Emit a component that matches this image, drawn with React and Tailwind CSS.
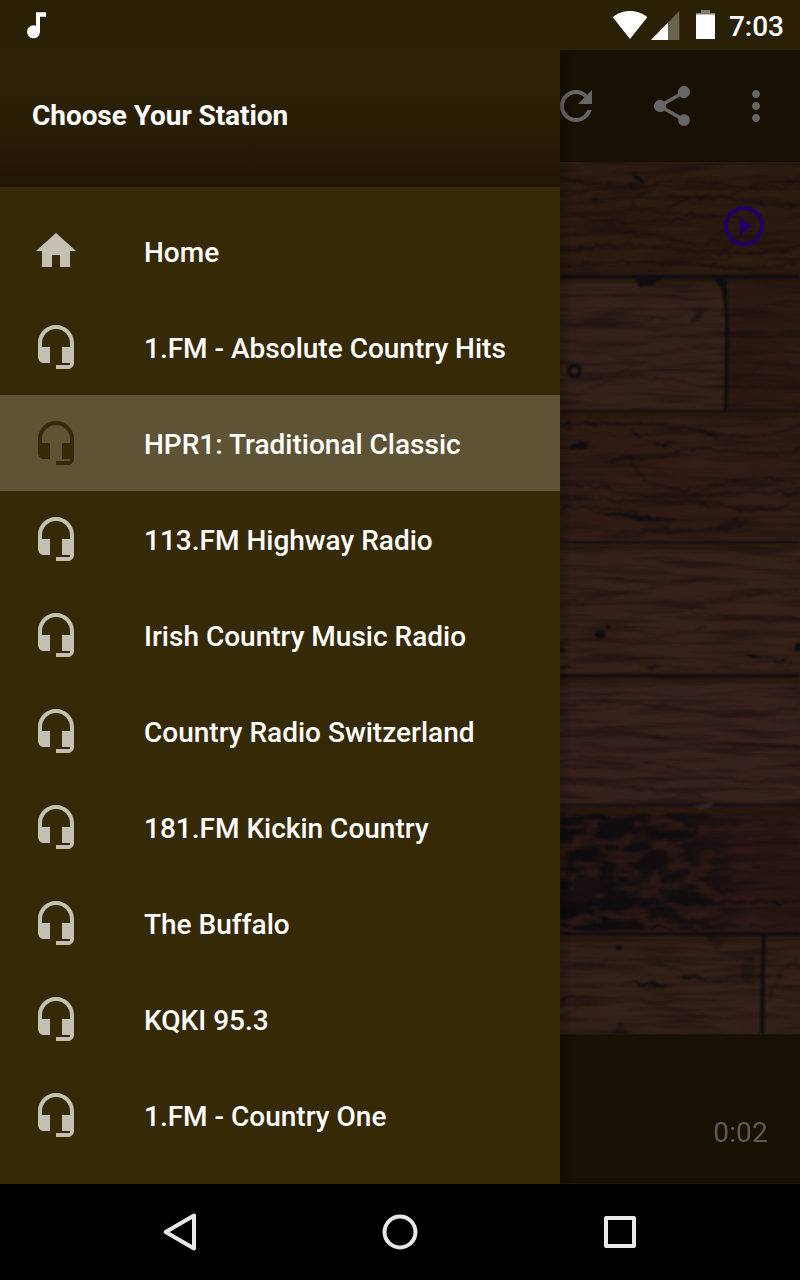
import React, { useState } from 'react';

const stations = [
  { name: 'Home', icon: 'home' },
  { name: '1.FM - Absolute Country Hits', icon: 'headset' },
  { name: 'HPR1: Traditional Classic', icon: 'headset' },
  { name: '113.FM Highway Radio', icon: 'headset' },
  { name: 'Irish Country Music Radio', icon: 'headset' },
  { name: 'Country Radio Switzerland', icon: 'headset' },
  { name: '181.FM Kickin Country', icon: 'headset' },
  { name: 'The Buffalo', icon: 'headset' },
  { name: 'KQKI 95.3', icon: 'headset' },
  { name: '1.FM - Country One', icon: 'headset' },
];

const icons = {
  home: 'M10 20v-6h4v6h5v-8h3L12 3 2 12h3v8z',
  headset:
    'M12 1c-4.97 0-9 4.03-9 9v7c0 1.66 1.34 3 3 3h3v-8H5v-2c0-3.87 3.13-7 7-7s7 3.13 7 7v2h-4v8h4v1h-7v2h6c1.66 0 3-1.34 3-3V10c0-4.97-4.03-9-9-9z',
  refresh:
    'M17.65 6.35C16.2 4.9 14.21 4 12 4c-4.42 0-7.99 3.58-7.99 8s3.57 8 7.99 8c3.73 0 6.84-2.55 7.73-6h-2.08c-.82 2.33-3.04 4-5.65 4-3.31 0-6-2.69-6-6s2.69-6 6-6c1.66 0 3.14.69 4.22 1.78L13 11h7V4l-2.35 2.35z',
  share:
    'M18 16.08c-.76 0-1.44.3-1.96.77L8.91 12.7c.05-.23.09-.46.09-.7s-.04-.47-.09-.7l7.05-4.11c.54.5 1.25.81 2.04.81 1.66 0 3-1.34 3-3s-1.34-3-3-3-3 1.34-3 3c0 .24.04.47.09.7L8.04 9.81C7.5 9.31 6.79 9 6 9c-1.66 0-3 1.34-3 3s1.34 3 3 3c.79 0 1.5-.31 2.04-.81l7.12 4.16c-.05.21-.08.43-.08.65 0 1.61 1.31 2.92 2.92 2.92s2.92-1.31 2.92-2.92-1.31-2.92-2.92-2.92z',
  more: 'M12 8c1.1 0 2-.9 2-2s-.9-2-2-2-2 .9-2 2 .9 2 2 2zm0 2c-1.1 0-2 .9-2 2s.9 2 2 2 2-.9 2-2-.9-2-2-2zm0 6c-1.1 0-2 .9-2 2s.9 2 2 2 2-.9 2-2-.9-2-2-2z',
};

const Icon = ({ name, className }) => (
  <svg viewBox="0 0 24 24" fill="currentColor" className={`h-12 w-12 shrink-0 ${className}`}>
    <path d={icons[name]} />
  </svg>
);

const StatusBar = () => (
  <div className="flex h-[50px] shrink-0 items-center justify-between bg-[#2a2005] pr-4 pl-[27px] text-white">
    <svg width="20" height="27" viewBox="0 0 20 27" fill="currentColor">
      <circle cx="6.5" cy="19.8" r="6.5" />
      <path d="M9 0.3h10v4.4h-6v15H9z" />
    </svg>
    <div className="flex items-center">
      <svg width="104" height="32" viewBox="612 9 104 32" fill="currentColor">
        <path d="M612.8 17.2C617 13.5 623 11 630 11s13 2.5 17.3 6.2L630 39z" />
        <path d="M679.3 11v29H651z" opacity=".3" />
        <path d="M668 22.5V40h-17z" />
        <path d="M701 10h9v3h5v2h-19v-2h5z" opacity=".4" />
        <path d="M696 14.5h19V39h-19z" />
      </svg>
      <span className="ml-[13px] pt-1 text-[28px] leading-8 font-medium">7:03</span>
    </div>
  </div>
);

const planks = [
  { y: 162, h: 114, fill: '#2c1a10' },
  { y: 276, h: 135, fill: '#342019' },
  { y: 411, h: 132, fill: '#2f1b14' },
  { y: 543, h: 133, fill: '#342018' },
  { y: 676, h: 130, fill: '#35201b' },
  { y: 806, h: 128, fill: '#2c1714' },
  { y: 934, h: 100, fill: '#321f17' },
];

const grain = [
  'M560 178Q620 190 650 184T735 186T800 176',
  'M560 196Q610 180 660 193T740 192T800 184',
  'M655 193Q630 197 632 204T670 213T740 216',
  'M560 212Q600 224 640 222T720 216',
  'M668 206Q700 192 735 199T800 205',
  'M560 236Q620 226 660 237T720 240',
  'M560 250Q620 240 680 250T800 247',
  'M560 267Q640 258 700 265T800 262',
  'M560 427Q640 418 700 431T800 425',
  'M610 461Q650 461 672 454T740 452T800 449',
  'M632 463Q640 484 670 488T730 482T800 484',
  'M560 486Q590 484 618 491T700 495T800 493',
  'M560 498Q610 501 640 500T720 507T800 501',
  'M560 508Q600 505 640 512',
];

const faintGrain = [
  'M560 322Q620 328 690 314',
  'M560 374Q600 382 640 363T715 347',
  'M570 400Q615 369 670 380T724 385',
  'M750 370Q775 357 800 370',
  'M742 392Q780 375 800 384',
  'M560 604Q610 595 650 588T710 580',
  'M800 592Q690 598 690 608T800 620',
  'M560 626Q620 625 640 632T705 629',
  'M560 665Q620 655 680 668T800 662',
  'M560 705Q620 698 680 710T800 706',
  'M560 730Q600 725 640 735T800 748',
  'M560 760Q620 752 680 769T800 779',
  'M560 780Q600 783 640 788T700 796',
  'M650 858Q700 852 740 862T800 857',
  'M560 970Q620 950 680 971T762 977',
  'M560 1018Q610 985 660 1005T750 1015',
  'M768 1000Q780 965 800 960',
];

const WoodBackground = () => (
  <svg viewBox="560 162 240 872" width="240" height="872" className="block">
    <defs>
      <filter id="fine" x="0" y="0" width="100%" height="100%" colorInterpolationFilters="sRGB">
        <feTurbulence type="fractalNoise" baseFrequency="0.014 0.13" numOctaves="3" seed="7" />
        <feColorMatrix values="0 0 0 0 0.08  0 0 0 0 0.045  0 0 0 0 0.05  3 0 0 0 -1.3" />
      </filter>
      <filter id="light" x="0" y="0" width="100%" height="100%" colorInterpolationFilters="sRGB">
        <feTurbulence type="fractalNoise" baseFrequency="0.012 0.045" numOctaves="3" seed="21" />
        <feColorMatrix values="0 0 0 0 0.24  0 0 0 0 0.16  0 0 0 0 0.11  2 0 0 0 -0.8" />
      </filter>
      <filter id="char" x="0" y="0" width="100%" height="100%" colorInterpolationFilters="sRGB">
        <feTurbulence type="fractalNoise" baseFrequency="0.03 0.075" numOctaves="4" seed="4" />
        <feColorMatrix values="0 0 0 0 0.05  0 0 0 0 0.043  0 0 0 0 0.055  6 0 0 0 -2.5" />
        <feGaussianBlur stdDeviation="0.8" />
      </filter>
      <filter id="soft" filterUnits="userSpaceOnUse" x="550" y="152" width="260" height="892" colorInterpolationFilters="sRGB">
        <feGaussianBlur stdDeviation="0.9" />
      </filter>
      <filter id="rough" filterUnits="userSpaceOnUse" x="550" y="152" width="260" height="892" colorInterpolationFilters="sRGB">
        <feTurbulence type="fractalNoise" baseFrequency="0.09" numOctaves="2" seed="3" result="n" />
        <feDisplacementMap in="SourceGraphic" in2="n" scale="9" xChannelSelector="R" yChannelSelector="G" />
        <feGaussianBlur stdDeviation="1.1" />
      </filter>
      <linearGradient id="charFade" x1="0" x2="1" y1="0" y2="0">
        <stop offset="0" stopColor="#fff" />
        <stop offset="0.55" stopColor="#fff" stopOpacity="0.75" />
        <stop offset="0.85" stopColor="#fff" stopOpacity="0.1" />
      </linearGradient>
      <mask id="charMask">
        <rect x="560" y="812" width="240" height="118" fill="url(#charFade)" />
      </mask>
    </defs>

    {planks.map((p) => (
      <rect key={p.y} x="560" y={p.y} width="240" height={p.h} fill={p.fill} />
    ))}
    <rect x="728" y="278" width="72" height="133" fill="#2b1811" />
    <rect x="560" y="162" width="240" height="872" filter="url(#light)" opacity=".3" />
    <rect x="560" y="162" width="240" height="872" filter="url(#fine)" opacity=".42" />
    <g mask="url(#charMask)">
      <rect x="560" y="812" width="240" height="118" filter="url(#char)" />
    </g>

    <g filter="url(#rough)" fill="none" stroke="#180e0f">
      {grain.map((d) => (
        <path key={d} d={d} strokeWidth="1.8" opacity=".75" />
      ))}
      {faintGrain.map((d) => (
        <path key={d} d={d} strokeWidth="1.8" opacity=".4" />
      ))}
    </g>

    {/* seams between the boards */}
    <g filter="url(#soft)" fill="none" stroke="#0e0c10">
      <path d="M560 281h240M560 415h240M560 547h240M560 681h240M560 811h240M560 940h240" stroke="#261708" strokeWidth="5" opacity=".6" />
      <path d="M560 276.5h240" strokeWidth="4" />
      <path d="M560 411h240M560 542.5h240M560 805h240" strokeWidth="2.2" />
      <path d="M560 676h240M560 934h240" strokeWidth="3.4" />
      <path d="M721 276Q727 300 727 330L726 411" strokeWidth="3.5" />
      <path d="M763.5 935L762 1034" strokeWidth="4" />
    </g>

    {/* knots and cracks */}
    <g filter="url(#rough)" fill="#0e0c11">
      <path d="M632 174l6 1 6 7-8-1zM634 278h30l-14 9-10-1zM716 278h14l-3 20z" />
      <ellipse cx="596" cy="200" rx="3" ry="1.5" opacity=".6" />
      <path d="M715 251l22-4-12 6zM690 325l8-14 10-3-9 12z" opacity=".5" />
      <path d="M570 445l22-5-6 6 8 1-24 2zM648 444l28-2-14 4zM612 461l30-6-10 6zM597 513l42 1 38 5-35 1z" />
      <path d="M600 534l60-6 40 2 35-10 15 4-14 6-70 4z" opacity=".45" />
      <path d="M561 422h12l-4 2zM580 424l20-3-10 5zM630 430l8 6 5 1-6-5zM700 426l20 13-12-5z" />
      <path d="M560 646l8 2-8 3zM745 657l12-2 4 3-8 1zM765 658l26 2-8 2zM560 666l14 1-12 2zM640 667l22-1-10 2z" />
      <path d="M560 831l12 6v8l-12-4zM595 822l10-6 8 16-6 6zM628 818l9-3-3 12zM662 833l38-5-10 9-50 5z" opacity=".8" />
      <path d="M576 872l20 5 12-4 5 12-20 10 16 6-25 8-24-6v-8l16-8zM655 872l30-4 6 6-28 8zM710 887l28 4-20 4z" opacity=".7" />
      <path d="M560 902l60-2 180 1v2l-140 1-100 6zM596 926h190l-110 2z" opacity=".9" />
      <path d="M618 982l30 0 24 2-20 2zM678 975l35 3-30 1zM560 996l46 1-46 2z" />
      <path d="M612 1034l8-16 8 16zM706 937h20l-8 14zM738 965l14-8 4 14-10 14z" opacity=".35" />
    </g>
    <g filter="url(#soft)" fill="#0e0c11">
      <path d="M626 731q16 5 36 6t50 4 88 5v2q-60-2-90-7t-54-3z" fill="#1c0b10" />
      <ellipse cx="600.5" cy="634.5" rx="5.5" ry="4" />
      <circle cx="608" cy="627" r="2" />
      <circle cx="799" cy="647" r="4" />
      <ellipse cx="619" cy="948" rx="3" ry="2" />
      <circle cx="574.5" cy="371" r="5.5" fill="none" stroke="#0e0c11" strokeWidth="4" />
      <path d="M692 806l22-4-5 6-8 2z" fill="#3a3033" opacity=".6" />
    </g>

    <circle cx="744" cy="226" r="18" fill="none" stroke="#200066" strokeWidth="4" />
    <path d="M740 217v18l12-9z" fill="#200066" />
  </svg>
);

const NavigationBar = () => (
  <div className="flex h-24 shrink-0 items-center justify-center gap-[172px] bg-black text-[#e8e8e8]">
    <svg width="48" height="48" viewBox="0 0 48 48" fill="none" stroke="currentColor" strokeWidth="4" strokeLinejoin="round">
      <path d="M38 7.5v33L9.7 24z" />
    </svg>
    <svg width="48" height="48" viewBox="0 0 48 48" fill="none" stroke="currentColor" strokeWidth="4">
      <circle cx="24" cy="24" r="15.5" />
    </svg>
    <svg width="48" height="48" viewBox="0 0 48 48" fill="none" stroke="currentColor" strokeWidth="4" strokeLinejoin="round">
      <path d="M10 10h28v28H10z" />
    </svg>
  </div>
);

const App = () => {
  const [selected, setSelected] = useState(2);

  return (
    <div className="flex h-[1280px] w-[800px] flex-col overflow-hidden bg-black font-['Roboto',sans-serif]">
      <StatusBar />
      <div className="flex min-h-0 flex-1">
        <nav className="flex w-[560px] shrink-0 flex-col bg-[#362906]">
          <div className="flex h-[137px] shrink-0 items-center bg-linear-to-b from-[#2e2206] via-[#2a1f05] to-[#1f1604] px-8 pb-[5px]">
            <h1 className="text-[28px] leading-8 font-bold tracking-[-0.06px] text-white">Choose Your Station</h1>
          </div>
          <ul className="pt-4">
            {stations.map((station, i) => (
              <li
                key={station.name}
                onClick={() => setSelected(i)}
                className={`flex h-24 items-center gap-16 px-8 ${i === selected ? 'bg-[#5e5435]' : ''}`}
              >
                <Icon name={station.icon} className={i === selected ? 'text-[#362906]' : 'text-[#c4c1b4]'} />
                <span className="pt-1 text-[28px] leading-8 font-medium whitespace-nowrap text-white">{station.name}</span>
              </li>
            ))}
          </ul>
        </nav>

        <main className="relative flex w-60 flex-col overflow-hidden bg-[#171003]">
          <div className="flex h-28 shrink-0 items-center text-[#666666]">
            <Icon name="refresh" className="-ml-2" />
            <Icon name="share" className="ml-12" />
            <Icon name="more" className="ml-9" />
          </div>
          <WoodBackground />
          <div className="flex flex-1 items-center justify-end border-y border-[#1c1708] pt-12 pr-8">
            <span className="text-[28px] leading-8 tracking-[0.2px] text-[#5e5b56]">0:02</span>
          </div>
          <div className="pointer-events-none absolute inset-y-0 left-0 w-3 bg-linear-to-r from-black/20 to-transparent" />
        </main>
      </div>
      <NavigationBar />
    </div>
  );
};

export default App;
